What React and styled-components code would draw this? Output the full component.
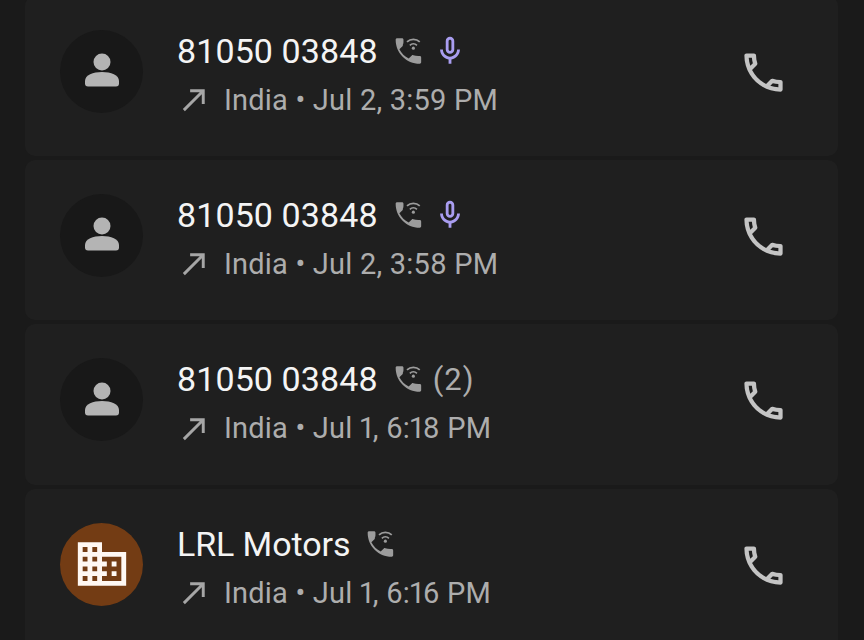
import React from "react";
import styled, { createGlobalStyle } from "styled-components";

const calls = [
  { id: 1, name: "81050 03848", mic: true, when: "India • Jul 2, 3:59 PM" },
  { id: 2, name: "81050 03848", mic: true, when: "India • Jul 2, 3:58 PM" },
  { id: 3, name: "81050 03848", count: "(2)", when: "India • Jul 1, 6:18 PM" },
  { id: 4, name: "LRL Motors", business: true, when: "India • Jul 1, 6:16 PM" },
];

const Global = createGlobalStyle`
  html, body {
    margin: 0;
    height: 100%;
    background: #1a1a1a;
    overflow: hidden;
  }
`;

const Screen = styled.div`
  width: 864px;
  height: 640px;
  overflow: hidden;
  font-family: Roboto, "Noto Sans", sans-serif;
`;

const List = styled.div`
  display: flex;
  flex-direction: column;
  gap: 4px;
  margin: -4.5px 26px 0 25px;
`;

const Card = styled.div`
  display: flex;
  align-items: flex-start;
  height: 160.4px;
  box-sizing: border-box;
  flex-shrink: 0;
  padding: 34px 50px 0 35px;
  background: #1f1f1f;
  border-radius: 10px;
`;

const Avatar = styled.div`
  display: flex;
  align-items: center;
  justify-content: center;
  flex-shrink: 0;
  width: 83px;
  height: 83px;
  border-radius: 50%;
  color: ${p => (p.$business ? "#fff8f3" : "#b4b4b4")};
  background: ${p => (p.$business ? "#733c14" : "#181818")};
`;

const Body = styled.div`
  flex: 1;
  display: flex;
  flex-direction: column;
  gap: 7px;
  margin-left: 34px;
`;

const Line = styled.div`
  display: flex;
  align-items: center;
  height: 42px;
`;

const Name = styled.span`
  font-size: 34px;
  color: #f4f4f4;
  letter-spacing: ${p => (p.$business ? "-0.1px" : "0.1px")};
`;

const Details = styled.span`
  font-size: 29px;
  color: #adadad;
  letter-spacing: 0.2px;
  margin-left: 12px;
  font-variant-numeric: proportional-nums;
`;

const Count = styled.span`
  font-size: 31px;
  color: #adadad;
  letter-spacing: 1px;
  margin-left: 9px;
`;

const CallButton = styled.div`
  display: flex;
  color: #c4c4c4;
  margin: 17px -1px 0 0;
`;

const PersonIcon = () => (
  <svg width="36" height="36" viewBox="0 0 36 36" fill="currentColor">
    <circle cx="18" cy="9" r="8.5" />
    <path d="M1 28c0-6 8-9 17-9s17 3 17 9v2.5a3 3 0 0 1-3 3H4a3 3 0 0 1-3-3z" />
  </svg>
);

const BuildingIcon = () => (
  <svg width="58" height="58" viewBox="0 0 24 24" fill="currentColor">
    <path d="M12 7V3H2v18h20V7H12zM6 19H4v-2h2v2zm0-4H4v-2h2v2zm0-4H4V9h2v2zm0-4H4V5h2v2zm4 12H8v-2h2v2zm0-4H8v-2h2v2zm0-4H8V9h2v2zm0-4H8V5h2v2zm10 12h-8v-2h2v-2h-2v-2h2v-2h-2V9h8v10zm-2-8h-2v2h2v-2zm0 4h-2v2h2v-2z" />
  </svg>
);

const WifiCallIcon = () => (
  <svg
    width="34"
    height="34"
    viewBox="0 0 24 24"
    fill="#9c9c9c"
    style={{ marginLeft: 12 }}
  >
    <path d="M20 15.51c-1.24 0-2.45-.2-3.57-.57-.1-.04-.21-.05-.31-.05-.26 0-.51.1-.71.29l-2.2 2.2c-2.83-1.45-5.15-3.76-6.59-6.59l2.2-2.2c.28-.28.36-.67.25-1.02C9.7 6.45 9.5 5.25 9.5 4c0-.55-.45-1-1-1H5c-.55 0-1 .45-1 1 0 9.39 7.61 17 17 17 .55 0 1-.45 1-1v-3.49c0-.55-.45-1-1-1z" />
    <g fill="none" stroke="#9c9c9c" strokeWidth="1.2">
      <path d="M12 5.6c2.5-2.4 6.5-2.4 9 0" />
      <path d="M14 8c1.4-1.3 3.6-1.3 5 0" />
    </g>
    <circle cx="16.5" cy="10" r="1.1" />
  </svg>
);

const MicIcon = () => (
  <svg
    width="34"
    height="34"
    viewBox="0 0 24 24"
    fill="#a99df0"
    style={{ marginLeft: 9 }}
  >
    <path d="M12 14c1.66 0 3-1.34 3-3V5c0-1.66-1.34-3-3-3S9 3.34 9 5v6c0 1.66 1.34 3 3 3zm-1-9c0-.55.45-1 1-1s1 .45 1 1v6c0 .55-.45 1-1 1s-1-.45-1-1V5zm6 6c0 2.76-2.24 5-5 5s-5-2.24-5-5H5c0 3.53 2.61 6.43 6 6.92V21h2v-3.08c3.39-.49 6-3.39 6-6.92h-2z" />
  </svg>
);

const OutgoingIcon = () => (
  <svg width="35" height="35" viewBox="0 0 24 24" fill="#a6a6a6">
    <path d="M9 5v2h6.59L4 18.59 5.41 20 17 8.41V15h2V5z" />
  </svg>
);

const PhoneIcon = () => (
  <svg width="51" height="51" viewBox="0 0 24 24" fill="currentColor">
    <path d="M6.54 5c.06.89.21 1.76.45 2.59l-1.2 1.2c-.41-1.2-.67-2.47-.76-3.79h1.51m9.86 12.02c.85.24 1.72.39 2.6.45v1.49c-1.32-.09-2.59-.35-3.8-.75l1.2-1.19M7.5 3H4c-.55 0-1 .45-1 1 0 9.39 7.61 17 17 17 .55 0 1-.45 1-1v-3.49c0-.55-.45-1-1-1-1.24 0-2.45-.2-3.57-.57-.1-.04-.21-.05-.31-.05-.26 0-.51.1-.71.29l-2.2 2.2c-2.83-1.45-5.15-3.76-6.59-6.59l2.2-2.2c.28-.28.36-.67.25-1.02C8.7 6.45 8.5 5.25 8.5 4c0-.55-.45-1-1-1z" />
  </svg>
);

const App = () => (
  <Screen>
    <Global />
    <List>
      {calls.map(call => (
        <Card key={call.id}>
          <Avatar $business={call.business}>
            {call.business ? <BuildingIcon /> : <PersonIcon />}
          </Avatar>
          <Body>
            <Line>
              <Name $business={call.business}>{call.name}</Name>
              <WifiCallIcon />
              {call.mic && <MicIcon />}
              {call.count && <Count>{call.count}</Count>}
            </Line>
            <Line>
              <OutgoingIcon />
              <Details>{call.when}</Details>
            </Line>
          </Body>
          <CallButton>
            <PhoneIcon />
          </CallButton>
        </Card>
      ))}
    </List>
  </Screen>
);

export default App;
